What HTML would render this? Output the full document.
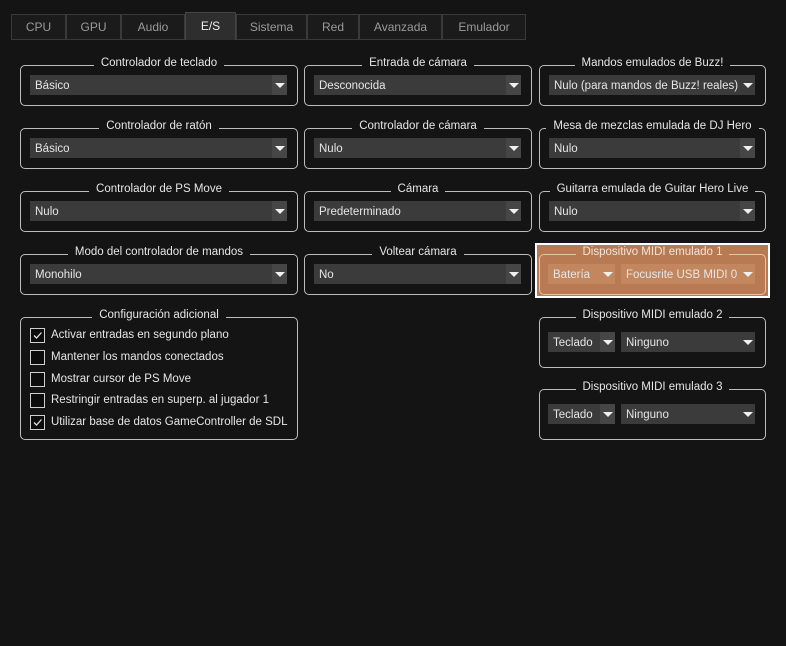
<!DOCTYPE html>
<html><head><meta charset="utf-8"><style>
*{box-sizing:border-box;margin:0;padding:0}
body{width:786px;height:646px;background:#141414;font-family:"Liberation Sans",sans-serif;font-size:11.5px;color:#e6e6e6;position:relative;overflow:hidden}
.tab{position:absolute;top:14px;height:26px;border:1px solid #3a3a3a;background:#1b1b1b;color:#9a9a9a;text-align:center;line-height:25px;font-size:12px}
.tab.sel{top:12px;height:28px;background:#2e2e2e;color:#f0f0f0;border-color:#444;border-bottom:none;line-height:26px}
.g{position:absolute;border:1px solid #bdbdbd;border-radius:5px}
.t{position:absolute;top:-11px;left:-20px;right:-20px;text-align:center;line-height:16px;white-space:nowrap}
.t span{background:#141414;padding:0 7px}
.c{position:absolute;height:20px;background:#3b3b3b;line-height:22px;padding-left:5px;white-space:nowrap;overflow:hidden}
.c i{position:absolute;right:0;top:0;width:15px;height:20px;background:#464646}
.c i:after{content:"";position:absolute;left:3px;top:8px;border-left:5px solid transparent;border-right:5px solid transparent;border-top:5px solid #f0f0f0}
.c.n i{background:transparent}
.cb{position:absolute;left:30px;width:15px;height:15px;border:1px solid #d0d0d0;background:#0c0c0c}
.cb svg{position:absolute;left:1px;top:1px}
.lbl{position:absolute;left:51px;line-height:17px;white-space:nowrap}
</style></head><body>
<div class="tab" style="left:11px;width:55px">CPU</div>
<div class="tab" style="left:66px;width:55px">GPU</div>
<div class="tab" style="left:121px;width:64px">Audio</div>
<div class="tab sel" style="left:185px;width:51px">E/S</div>
<div class="tab" style="left:236px;width:71px">Sistema</div>
<div class="tab" style="left:307px;width:52px">Red</div>
<div class="tab" style="left:359px;width:83px">Avanzada</div>
<div class="tab" style="left:442px;width:84px">Emulador</div>

<div class="g" style="left:20px;top:65px;width:278px;height:41px"><div class="t"><span>Controlador de teclado</span></div></div>
<div class="c" style="left:30px;top:75px;width:257px">Básico<i></i></div>
<div class="g" style="left:304px;top:65px;width:228px;height:41px"><div class="t"><span>Entrada de cámara</span></div></div>
<div class="c" style="left:314px;top:75px;width:207px">Desconocida<i></i></div>
<div class="g" style="left:539px;top:65px;width:227px;height:41px"><div class="t"><span>Mandos emulados de Buzz!</span></div></div>
<div class="c n" style="left:549px;top:75px;width:206px">Nulo (para mandos de Buzz! reales)<i></i></div>

<div class="g" style="left:20px;top:128px;width:278px;height:41px"><div class="t"><span>Controlador de ratón</span></div></div>
<div class="c" style="left:30px;top:138px;width:257px">Básico<i></i></div>
<div class="g" style="left:304px;top:128px;width:228px;height:41px"><div class="t"><span>Controlador de cámara</span></div></div>
<div class="c" style="left:314px;top:138px;width:207px">Nulo<i></i></div>
<div class="g" style="left:539px;top:128px;width:227px;height:41px"><div class="t"><span>Mesa de mezclas emulada de DJ Hero</span></div></div>
<div class="c" style="left:549px;top:138px;width:206px">Nulo<i></i></div>

<div class="g" style="left:20px;top:191px;width:278px;height:41px"><div class="t"><span>Controlador de PS Move</span></div></div>
<div class="c" style="left:30px;top:201px;width:257px">Nulo<i></i></div>
<div class="g" style="left:304px;top:191px;width:228px;height:41px"><div class="t"><span>Cámara</span></div></div>
<div class="c" style="left:314px;top:201px;width:207px">Predeterminado<i></i></div>
<div class="g" style="left:539px;top:191px;width:227px;height:41px"><div class="t"><span>Guitarra emulada de Guitar Hero Live</span></div></div>
<div class="c" style="left:549px;top:201px;width:206px">Nulo<i></i></div>

<div class="g" style="left:20px;top:254px;width:278px;height:41px"><div class="t"><span>Modo del controlador de mandos</span></div></div>
<div class="c" style="left:30px;top:264px;width:257px">Monohilo<i></i></div>
<div class="g" style="left:304px;top:254px;width:228px;height:41px"><div class="t"><span>Voltear cámara</span></div></div>
<div class="c" style="left:314px;top:264px;width:207px">No<i></i></div>

<div style="position:absolute;left:535px;top:243px;width:235px;height:55px;background:#b87a52;border:2px solid #fff"></div>
<div class="g" style="left:539px;top:254px;width:227px;height:41px;border-color:#e6c2a8"><div class="t"><span style="background:#b87a52;color:#f3e3d8">Dispositivo MIDI emulado 1</span></div></div>
<div class="c n" style="left:548px;top:264px;width:67px;background:#c2875f">Batería<i></i></div>
<div class="c n" style="left:621px;top:264px;width:134px;background:#c2875f">Focusrite USB MIDI 0<i></i></div>

<div class="g" style="left:539px;top:317px;width:227px;height:51px"><div class="t"><span>Dispositivo MIDI emulado 2</span></div></div>
<div class="c" style="left:548px;top:332px;width:67px">Teclado<i></i></div>
<div class="c n" style="left:621px;top:332px;width:134px">Ninguno<i></i></div>
<div class="g" style="left:539px;top:389px;width:227px;height:51px"><div class="t"><span>Dispositivo MIDI emulado 3</span></div></div>
<div class="c" style="left:548px;top:404px;width:67px">Teclado<i></i></div>
<div class="c n" style="left:621px;top:404px;width:134px">Ninguno<i></i></div>

<div class="g" style="left:20px;top:317px;width:278px;height:123px"><div class="t"><span>Configuración adicional</span></div></div>
<div class="cb" style="top:328px"><svg width="11" height="11"><path d="M2 5.5L4.5 8L9.5 2.5" stroke="#e0e0e0" stroke-width="1.3" fill="none"/></svg></div>
<div class="lbl" style="top:327px">Activar entradas en segundo plano</div>
<div class="cb" style="top:350px"></div>
<div class="lbl" style="top:349px">Mantener los mandos conectados</div>
<div class="cb" style="top:372px"></div>
<div class="lbl" style="top:371px">Mostrar cursor de PS Move</div>
<div class="cb" style="top:393px"></div>
<div class="lbl" style="top:392px">Restringir entradas en superp. al jugador 1</div>
<div class="cb" style="top:415px"><svg width="11" height="11"><path d="M2 5.5L4.5 8L9.5 2.5" stroke="#e0e0e0" stroke-width="1.3" fill="none"/></svg></div>
<div class="lbl" style="top:414px">Utilizar base de datos GameController de SDL</div>
</body></html>
